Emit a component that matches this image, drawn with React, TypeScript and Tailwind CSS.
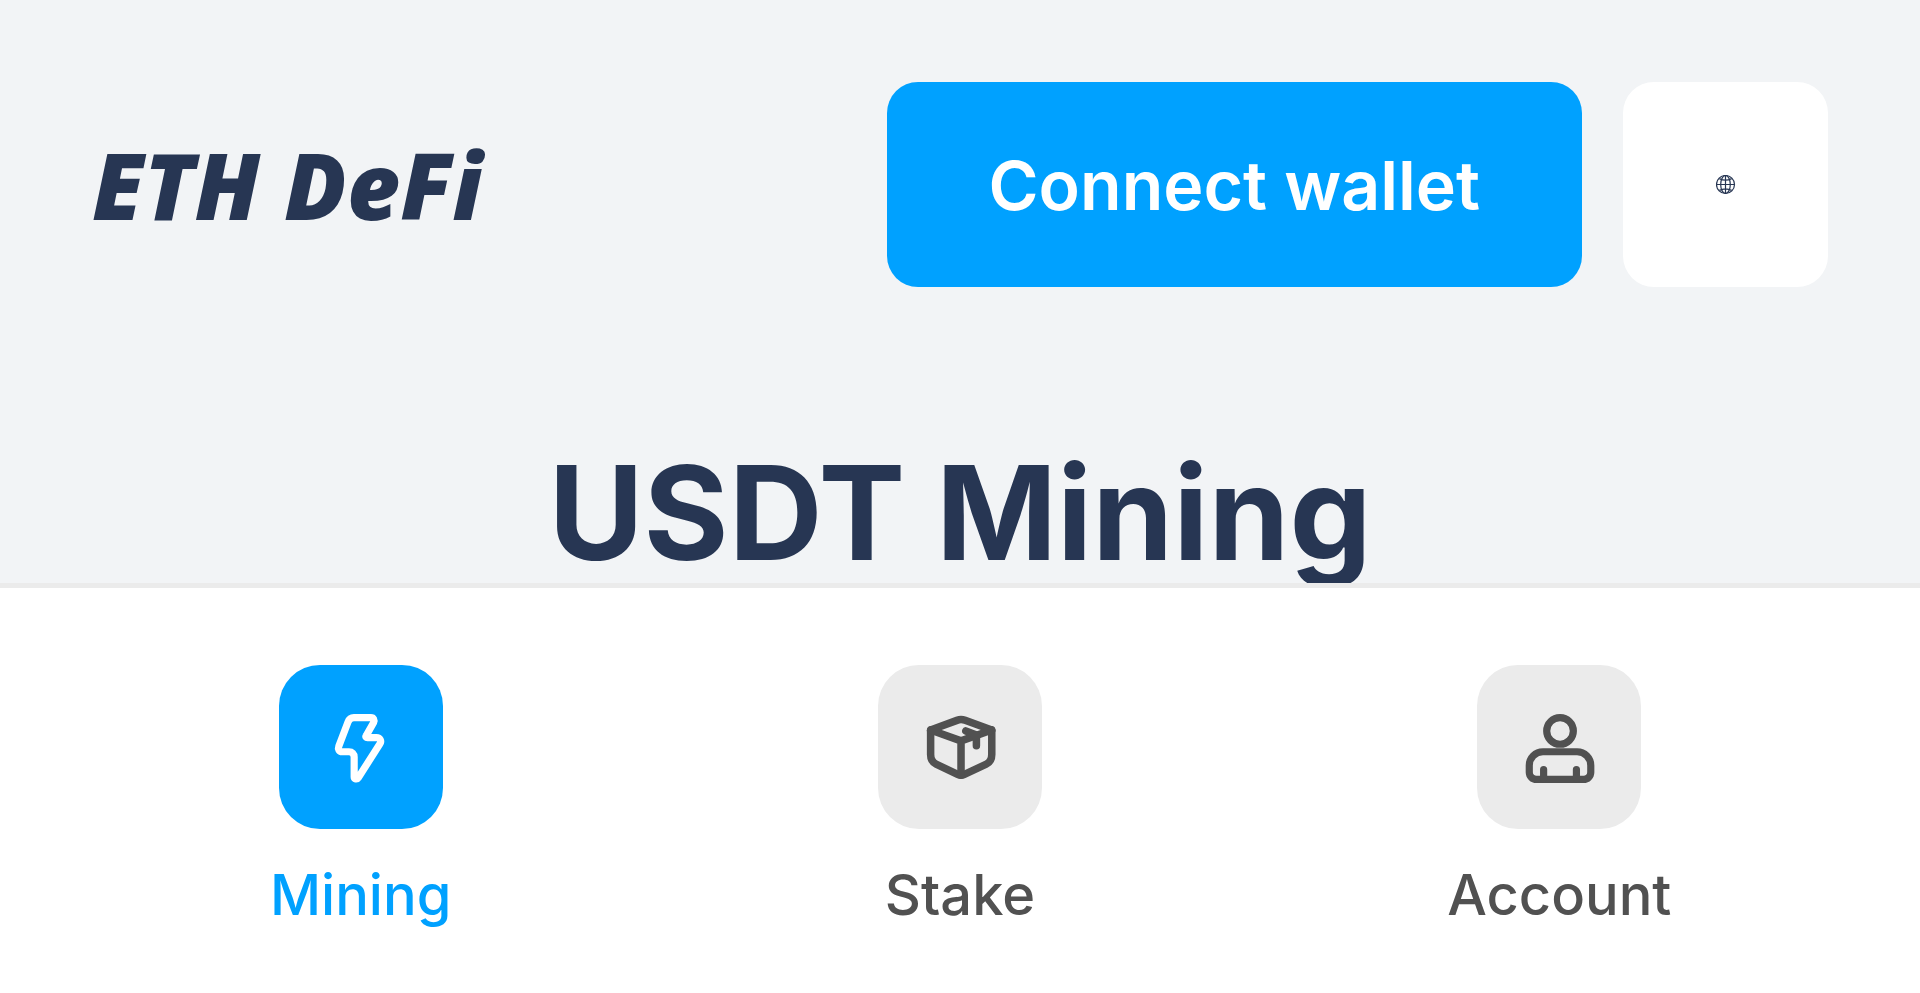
import type { ReactNode } from "react";

function BoltIcon() {
  return (
    <svg viewBox="0 0 24 24" className="size-[82px]" fill="none" stroke="currentColor" strokeWidth="2.1" strokeLinecap="round" strokeLinejoin="round" aria-hidden="true">
      <path d="M9.9 3.4H14.9C15.7 3.4 16 4.1 15.7 4.8L13.5 8.7C13.3 9 13.5 9.25 13.9 9.25H16.5C17.6 9.25 18.1 10.2 17.5 11.1L11.2 21C10.8 21.6 10 21.4 10 20.8V14.9C10 14 9.4 13.4 8.5 13.4H6.5C5.6 13.4 5.2 12.6 5.5 11.8L8.2 4.7C8.5 3.9 9.1 3.4 9.9 3.4Z" />
    </svg>
  );
}

function BoxIcon() {
  return (
    <svg viewBox="0 0 24 24" className="size-[82px]" fill="none" stroke="currentColor" strokeWidth="2.2" strokeLinecap="round" strokeLinejoin="round" aria-hidden="true">
      <path d="M3.4 7L11.1 4.2Q12.3 3.75 13.5 4.2L21.3 7V14.2C21.3 15.5 20.8 16.5 19.7 17L13.3 20Q12.3 20.5 11.3 20L5 17C3.9 16.5 3.4 15.5 3.4 14.2Z" />
      <path d="M3.4 7L12.3 10.2L21.3 7M12.3 10.2V20.2" />
      <path d="M13.7 7.3L16.8 8.5V11.6" />
    </svg>
  );
}

function PersonIcon() {
  return (
    <svg viewBox="0 0 24 24" className="size-[82px]" fill="none" stroke="currentColor" strokeWidth="2.1" strokeLinecap="round" strokeLinejoin="round" aria-hidden="true">
      <circle cx="12.3" cy="7.3" r="3.9" />
      <path d="M7.3 13.4H17.3A4 4 0 0 1 21.3 17.4V19.4A2.1 2.1 0 0 1 19.2 21.5H5.4A2.1 2.1 0 0 1 3.3 19.4V17.4A4 4 0 0 1 7.3 13.4Z" />
      <path d="M7.5 18.6V21.3M17.1 18.6V21.3" />
    </svg>
  );
}

function GlobeIcon() {
  return (
    <svg viewBox="0 0 20 20" className="size-5" fill="none" stroke="currentColor" strokeWidth="1.2" aria-hidden="true">
      <circle cx="9.5" cy="9.5" r="9" />
      <ellipse cx="9.5" cy="9.5" rx="4.8" ry="9" />
      <path d="M9.5 .5V18.5M.5 9.5H18.5M3.3 3.6Q9.5 6.8 15.7 3.6M3.3 15.4Q9.5 12.2 15.7 15.4" />
    </svg>
  );
}

function NavItem({ label, icon, active = false }: { label: string; icon: ReactNode; active?: boolean }) {
  return (
    <a
      href="#"
      aria-current={active ? "page" : undefined}
      className={`flex flex-1 flex-col items-center gap-8 ${active ? "text-[#00a1ff]" : "text-[#515151]"}`}
    >
      <span className={`grid size-[164px] place-items-center rounded-[41px] ${active ? "bg-[#00a1ff] text-white" : "bg-[#ebebeb]"}`}>
        {icon}
      </span>
      <span className="text-[56px] leading-[68px] font-medium">{label}</span>
    </a>
  );
}

export default function App() {
  return (
    <div className="min-h-screen bg-[#f2f4f6] pb-[410px] font-['Inter',sans-serif] text-[#273653]">
      <header className="flex items-center justify-between px-[92px] pt-[82px]">
        <a href="#" className="font-['Open_Sans',sans-serif] text-[92px] leading-none font-extrabold italic">
          ETH DeFi
        </a>
        <div className="flex gap-[41px]">
          <button type="button" className="h-[205px] rounded-[31px] bg-[#00a1ff] px-[102px] text-[68px] font-semibold text-white">
            Connect wallet
          </button>
          <button type="button" aria-label="Language" className="grid size-[205px] place-items-center rounded-[31px] bg-white">
            <GlobeIcon />
          </button>
        </div>
      </header>
      <main>
        <h1 className="mt-[146px] text-center text-[130px] leading-[160px] font-bold">USDT Mining</h1>
      </main>
      <nav className="fixed inset-x-0 bottom-0 flex h-[410px] border-t-[5px] border-[#ebebeb] bg-white px-[61px] pt-[77px]">
        <NavItem label="Mining" icon={<BoltIcon />} active />
        <NavItem label="Stake" icon={<BoxIcon />} />
        <NavItem label="Account" icon={<PersonIcon />} />
      </nav>
    </div>
  );
}
